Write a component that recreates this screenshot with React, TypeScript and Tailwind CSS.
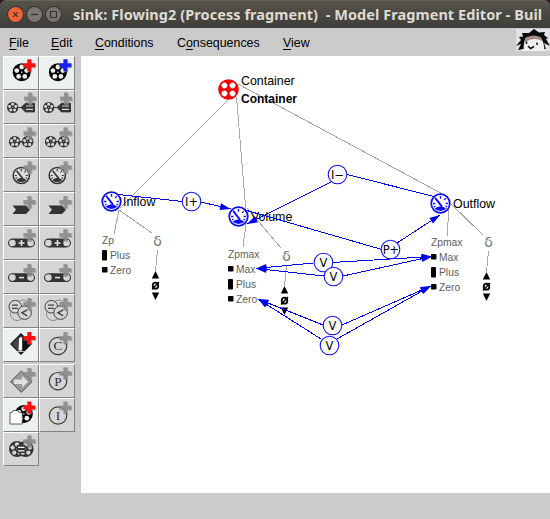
import React from "react";

type Pt = [number, number];

function Plus({ x, y, color = "#8c8c8c", shade = "#777" }: { x: number; y: number; color?: string; shade?: string }) {
  const d = "M-2-6h4v4h4v4h-4v4h-4v-4h-4v-4h4z";
  return (
    <g transform={`translate(${x} ${y})`}>
      <path d={d} fill={shade} opacity=".45" transform="translate(.9 .9)" />
      <path d={d} fill={color} opacity={color === "#8c8c8c" ? 0.85 : 1} />
    </g>
  );
}

function Reel({ x, y, r, fill = "#333", hole = "#d5d5d5" }: { x: number; y: number; r: number; fill?: string; hole?: string }) {
  return (
    <g transform={`translate(${x} ${y}) scale(${r / 9})`}>
      <circle r="9" fill={fill} />
      {[-90, -18, 54, 126, 198].map((a) => (
        <circle key={a} cx={5.2 * Math.cos((a * Math.PI) / 180)} cy={5.2 * Math.sin((a * Math.PI) / 180)} r="2.4" fill={hole} />
      ))}
      <circle r=".8" fill={hole} />
    </g>
  );
}

function Gauge({ x, y, r, color, bg }: { x: number; y: number; r: number; color: string; bg: string }) {
  return (
    <g transform={`translate(${x} ${y}) scale(${r / 10})`} stroke={color} fill="none">
      <circle r="9" fill={bg} strokeWidth="1.7" />
      <path d="M-7.2 0h2.2M7.2 0H5M0-7.2V-4.6M5.1-5.1 3.5-3.5M-6.3 3.2l1.4-.6M6.3 3.2l-1.4-.6" strokeWidth="1.3" />
      <path d="M-5.2-5.4 1.4 3" strokeWidth="1.8" />
      <path d="M-5.8 5.2Q-3 2.8 0 2.6Q3 2.8 5.8 5.2Q3 7.3 0 7.3Q-3 7.3-5.8 5.2Z" fill={color} stroke="none" />
    </g>
  );
}

function Chain({ sign, y }: { sign: "+" | "-"; y: number }) {
  return (
    <g>
      <rect x="5" y={y - 4.4} width="27" height="8.8" rx="4.4" fill="#333" />
      <circle cx="9.4" cy={y} r="3.3" fill="#d5d5d5" />
      <circle cx="27.6" cy={y} r="3.3" fill="#d5d5d5" />
      <path d={sign === "+" ? `M15.5 ${y}h6M18.5 ${y - 3}v6` : `M16 ${y}h5`} stroke="#e4e4e4" strokeWidth="1.6" />
    </g>
  );
}

function Letter({ c, y }: { c: string; y: number }) {
  return (
    <g>
      <circle cx="19" cy={y} r="8.7" fill="none" stroke="#3a3a3a" strokeWidth="1.2" />
      <text x="19" y={y + 4.4} textAnchor="middle" fontSize="13.5" fill="#333" fontFamily="'Liberation Serif', serif">{c}</text>
      <Plus x={26.3} y={y - 8} />
    </g>
  );
}

function LinkIcon() {
  return (
    <g>
      <Reel x={9.7} y={17.5} r={5.6} />
      <path d="M14 17.5h4M18 17.5l4.500-4.2h9v8.6h-9z" stroke="#333" fill="#333" />
      <path d="M23 16h7M23 19.3h7" stroke="#d5d5d5" strokeWidth="1.2" />
      <Plus x={27} y={8.6} />
    </g>
  );
}

function PairIcon() {
  return (
    <g>
      <Reel x={11.7} y={17.7} r={5.8} />
      <Reel x={24.7} y={17.7} r={5.8} />
      <path d="M15.5 17.7h5" stroke="#333" strokeWidth="1.4" />
      <Plus x={26.5} y={9.3} />
    </g>
  );
}

function GaugeIcon() {
  return (
    <g>
      <Gauge x={18.3} y={17.5} r={9} color="#333" bg="#dcdcdc" />
      <Plus x={26.5} y={9.3} />
    </g>
  );
}

function ArrowIcon() {
  return (
    <g>
      <path d="M9.5 13.5H23l4 4.3-4 4.2H9.5l3.5-4.2z" fill="#333" />
      <Plus x={26.3} y={10} />
    </g>
  );
}

function ChainIcon({ sign }: { sign: "+" | "-" }) {
  return (
    <g>
      <Chain sign={sign} y={sign === "+" ? 17 : 17.6} />
      <Plus x={26.3} y={sign === "+" ? 9 : 10} />
    </g>
  );
}

function CompareIcon() {
  return (
    <g fill="#d5d5d5" stroke="#444" strokeWidth="1">
      <circle cx="14" cy="20" r="6.5" stroke="#888" />
      <circle cx="20" cy="12" r="6" stroke="#888" />
      <circle cx="12.3" cy="12.7" r="6.3" />
      <path d="M9 11.2h6M9 14.3h6" strokeWidth="1.3" />
      <circle cx="21.6" cy="18.6" r="6.8" />
      <path d="M24.2 15.8l-5.2 3 5.2 3" fill="none" strokeWidth="1.5" />
      <g stroke="none"><Plus x={26.3} y={10} /></g>
    </g>
  );
}

const Red = ({ y = 9.3 }: { y?: number }) => <Plus x={26.3} y={y} color="#ff1010" />;

const icons: (React.ReactNode | null)[][] = [
  [
    <g><Reel x={18.7} y={16.2} r={9} fill="#000" hole="#ebefef" /><Red /></g>,
    <g><Reel x={18.9} y={16.2} r={9} fill="#000" hole="#ebefef" /><Plus x={26.4} y={9.3} color="#1d1df5" /></g>,
  ],
  [<LinkIcon />, <LinkIcon />],
  [<PairIcon />, <PairIcon />],
  [<GaugeIcon />, <GaugeIcon />],
  [<ArrowIcon />, <ArrowIcon />],
  [<ChainIcon sign="+" />, <ChainIcon sign="+" />],
  [<ChainIcon sign="-" />, <ChainIcon sign="-" />],
  [<CompareIcon />, <CompareIcon />],
  [
    <g>
      <path d="M18 5 29 16 18 27 7 16Z" fill="#111" />
      <path d="M18 6.5V25.5L8.5 16z" fill="#666" opacity=".6" />
      <path d="M16 10.5 19.200 8.5v14h-3.600z" fill="#fff" />
      <path d="M14 23.5h8" stroke="#bbb" />
      <Red y={10} />
    </g>,
    <Letter c="C" y={18} />,
  ],
  [
    <g>
      <path d="M18.3 7 29 17.7 18.3 28.4 7.6 17.7Z" fill="#999" stroke="#555" />
      <path d="M11 15.5h8v-3.7l6 6-6 6V20h-8z" fill="#e2e2e2" />
      <Plus x={26.3} y={10} />
    </g>,
    <Letter c="P" y={17.2} />,
  ],
  [
    <g>
      <Reel x={20.8} y={16} r={9} fill="#000" hole="#ebefef" />
      <path d="M7 14.5h2l1-2h5l1 2h3.300V26H7z" fill="#fff" stroke="#222" strokeWidth=".7" />
      <Red y={9.5} />
    </g>,
    <Letter c="I" y={17.5} />,
  ],
  [
    <g>
      <Reel x={14} y={17} r={8} />
      <Reel x={22.6} y={17} r={8} />
      <rect x="14" y="13" width="8.500" height="8" fill="#333" />
      <path d="M15 15.4h6.500M15 18.8h6.500" stroke="#fff" strokeWidth="1.3" />
      <Plus x={26.3} y={9.3} />
    </g>,
    null,
  ],
];

const active = new Set(["0-0", "0-1", "8-0", "10-0"]);

function ToolButton({ on, children }: { on: boolean; children: React.ReactNode }) {
  return (
    <button className={`block h-[34px] w-9 border border-t-white border-l-white border-r-[#828282] border-b-[#828282] ${on ? "bg-[#ebf0f0]" : "bg-[#d5d5d5]"}`}>
      <svg viewBox="1 1 34 32" className="block h-8 w-[34px]">{children}</svg>
    </button>
  );
}

function Arrow({ from, to, head = true }: { from: Pt; to: Pt; head?: boolean }) {
  const a = (Math.atan2(to[1] - from[1], to[0] - from[0]) * 180) / Math.PI;
  return (
    <g>
      <path d={`M${from}L${to}`} stroke="#0000f0" strokeWidth="1" shapeRendering="crispEdges" />
      {head && <path d="M0 0L-10.5-3.4V3.4Z" fill="#0000f0" transform={`translate(${to}) rotate(${a})`} />}
    </g>
  );
}

function Badge({ x, y, label }: { x: number; y: number; label: string }) {
  return (
    <g>
      <circle cx={x} cy={y} r="9.3" fill="#fff" stroke="#1818f0" strokeWidth="1.1" />
      <text x={x} y={y + 4} textAnchor="middle" fontSize="11.5" fontFamily="'DejaVu Sans', sans-serif" letterSpacing={label.startsWith("P") ? "-0.6" : "0"}>{label}</text>
    </g>
  );
}

function Space({ x, y, name, values }: { x: number; y: number; name: string; values: string[] }) {
  return (
    <g fill="#606060" fontSize="10.3">
      <text x={x} y={y}>{name}</text>
      {values.map((v, i) => (
        <g key={v}>
          {v === "Plus" ? (
            <rect x={x} y={y + 6 + i * 15} width="5" height="10.5" rx="1" fill="#000" />
          ) : (
            <rect x={x} y={y + 8 + i * 15} width="5.5" height="5.5" rx=".8" fill="#000" />
          )}
          <text x={x + 8} y={y + 15 + i * 15}>{v}</text>
        </g>
      ))}
    </g>
  );
}

function Derivative({ x, y }: { x: number; y: number }) {
  return (
    <g>
      <text x={x} y={y} textAnchor="middle" fontSize="14" fill="#777" fontFamily="'DejaVu Sans', sans-serif">δ</text>
      <path d={`M${x} ${y + 4}L${x - 2} ${y + 25}`} stroke="#aaa" shapeRendering="crispEdges" />
      <path d={`M${x - 2} ${y + 25}l3.7 7.5h-7.4zM${x - 2} ${y + 54}l3.7-7.5h-7.4z`} fill="#000" />
      <ellipse cx={x - 2} cy={y + 39.7} rx="2.8" ry="3" fill="none" stroke="#000" strokeWidth="1.8" />
      <path d={`M${x - 5.5} ${y + 43.5}l7-7.5`} stroke="#000" strokeWidth="1.4" />
    </g>
  );
}

function Diagram() {
  return (
    <svg viewBox="81 56 469 437" className="block h-[437px] w-[469px] bg-white" fontFamily="'Liberation Sans', Arial, sans-serif">
      <path
        d="M230 98L120 208M236.5 97L247 224M238 84L448 197M119 210L114 234M119 210L152 233M246 224L243 247M247 208L281 248M449 208L447 236M450 203L483 235"
        stroke="#a8a8a8" fill="none" shapeRendering="crispEdges"
      />
      <g fontSize="12.4">
        <text x="241" y="85">Container</text>
        <text x="241" y="103" fontWeight="bold" textLength="56" lengthAdjust="spacingAndGlyphs">Container</text>
        <text x="123" y="206">Inflow</text>
        <text x="251" y="221">Volume</text>
        <text x="453" y="208">Outflow</text>
      </g>
      <g transform="translate(228.5 89.5)">
        <circle r="10.3" fill="#f50000" />
        {[[0, -5.7], [5.7, 0], [0, 5.7], [-5.7, 0]].map(([x, y]) => (
          <circle key={`${x},${y}`} cx={x} cy={y} r="2.9" fill="#fff" transform="rotate(45)" />
        ))}
      </g>
      <Gauge x={111.5} y={201.5} r={10.3} color="#0c0cf5" bg="#fff" />
      <Gauge x={238.5} y={216.5} r={10.3} color="#0c0cf5" bg="#fff" />
      <Gauge x={440.5} y={203.5} r={10.3} color="#0c0cf5" bg="#fff" />
      <Space x={102} y={244} name="Zp" values={["Plus", "Zero"]} />
      <Space x={228} y={258} name="Zpmax" values={["Max", "Plus", "Zero"]} />
      <Space x={431} y={246} name="Zpmax" values={["Max", "Plus", "Zero"]} />
      <Derivative x={157.5} y={246} />
      <Derivative x={286.5} y={261} />
      <Derivative x={488.5} y={247} />
      <Arrow from={[118, 194.5]} to={[183, 201.5]} head={false} />
      <Arrow from={[201, 202]} to={[230.5, 209]} />
      <Arrow from={[434, 196.5]} to={[347, 174.5]} head={false} />
      <Arrow from={[331, 182]} to={[247, 224]} />
      <Arrow from={[245, 210]} to={[382, 249.5]} head={false} />
      <Arrow from={[397, 243]} to={[440, 215]} />
      <Arrow from={[313, 263]} to={[256, 268.5]} />
      <Arrow from={[332, 262.5]} to={[432, 256.5]} />
      <Arrow from={[324, 276]} to={[256, 268.5]} />
      <Arrow from={[343, 276]} to={[432, 256.5]} />
      <Arrow from={[323, 325]} to={[258, 299]} />
      <Arrow from={[342, 325]} to={[431, 286]} />
      <Arrow from={[321, 339]} to={[258, 299]} />
      <Arrow from={[337, 339]} to={[431, 286]} />
      <Badge x={191.5} y={201.5} label="I+" />
      <Badge x={337.5} y={174.5} label="I−" />
      <Badge x={390.5} y={249.5} label="P+" />
      <Badge x={323.5} y={262.5} label="V" />
      <Badge x={333.5} y={276.5} label="V" />
      <Badge x={332.5} y={325.5} label="V" />
      <Badge x={329.5} y={345.5} label="V" />
    </svg>
  );
}

function Face() {
  return (
    <svg viewBox="0 0 34 22" className="ml-auto mb-[5px] block h-[22px] w-[34px] bg-[#e2e2e6]">
      <path d="M0 17L5 11 3 8 7 7.500 6 4 13 4 18 0 23 3.500 29 3 28 6 32 9 30 10 34 17 28 14 30 20 7 20 2 21 5 15Z" fill="#0a0a0a" />
      <path d="M7.500 22Q7.500 14 9.500 9Q18 6 25 9Q29 15 28 22Z" fill="#f0f0f0" />
      <path d="M9 11Q10 8 11 8Q18 5 24.500 8L26 12Q18 7.500 9 13Z" fill="#a78a8c" />
      <path d="M10.500 12.500v2.500M21 13.500v2.500M12 17l2.500 2.500 3.500-2" stroke="#111" strokeWidth="1.5" fill="none" />
    </svg>
  );
}

const title = "sink: Flowing2 (Process fragment)  - Model Fragment Editor - Buil";

const winButtons = [
  { id: "close", cls: "bg-[#eb6637]", d: "M5.2 5.2l4.6 4.6M9.8 5.2L5.2 9.8" },
  { id: "min", cls: "bg-[#7a7770]", d: "M4 7.5h7" },
  { id: "max", cls: "bg-[#7a7770]", d: "M4.5 4.5h6v6h-6z" },
];

export default function App() {
  return (
    <div className="flex h-[519px] w-[550px] flex-col overflow-hidden bg-[#cbcbcb] font-['Liberation_Sans',Arial,sans-serif]">
      <div className="bg-[#2b1722]">
        <header className="flex h-7 items-center rounded-t-[6px] border-t border-[#66635a] bg-linear-to-b from-[#56534b] to-[#3e3d39] pl-2">
          <div className="flex gap-1">
            {winButtons.map((b) => (
              <span key={b.id} className={`block size-[15px] rounded-full shadow-[0_0_0_1px_#35332f] ${b.cls}`}>
                <svg viewBox="0 0 15 15" className="block size-[15px]">
                  <path d={b.d} fill="none" stroke="#3a2f28" strokeWidth="1.1" />
                </svg>
              </span>
            ))}
          </div>
          <h1 className="ml-[12px] w-[471px] shrink-0 overflow-hidden font-['Noto_Sans',sans-serif] text-[14.5px] leading-[27px] font-bold tracking-[0.06px] whitespace-pre text-[#dfdbd2]">
            {title}
          </h1>
        </header>
      </div>
      <nav className="flex h-7 shrink-0 items-center pl-[9px] text-[12.4px] text-black">
        <span className="w-[42px] pt-[3px]"><u className="underline-offset-2">F</u>ile</span>
        <span className="w-[44px] pt-[3px]"><u className="underline-offset-2">E</u>dit</span>
        <span className="w-[82px] pt-[3px]"><u className="underline-offset-2">C</u>onditions</span>
        <span className="w-[106px] pt-[3px]">C<u className="underline-offset-2">o</u>nsequences</span>
        <span className="pt-[3px]"><u className="underline-offset-2">V</u>iew</span>
        <Face />
      </nav>
      <main className="flex">
        <aside className="w-[81px] pl-[3px]">
          {icons.map((row, r) => (
            <div key={r} className={`flex ${r === 9 ? "mt-0.5" : ""}`}>
              {row.map((icon, c) => icon && <ToolButton key={c} on={active.has(`${r}-${c}`)}>{icon}</ToolButton>)}
            </div>
          ))}
        </aside>
        <Diagram />
      </main>
    </div>
  );
}
